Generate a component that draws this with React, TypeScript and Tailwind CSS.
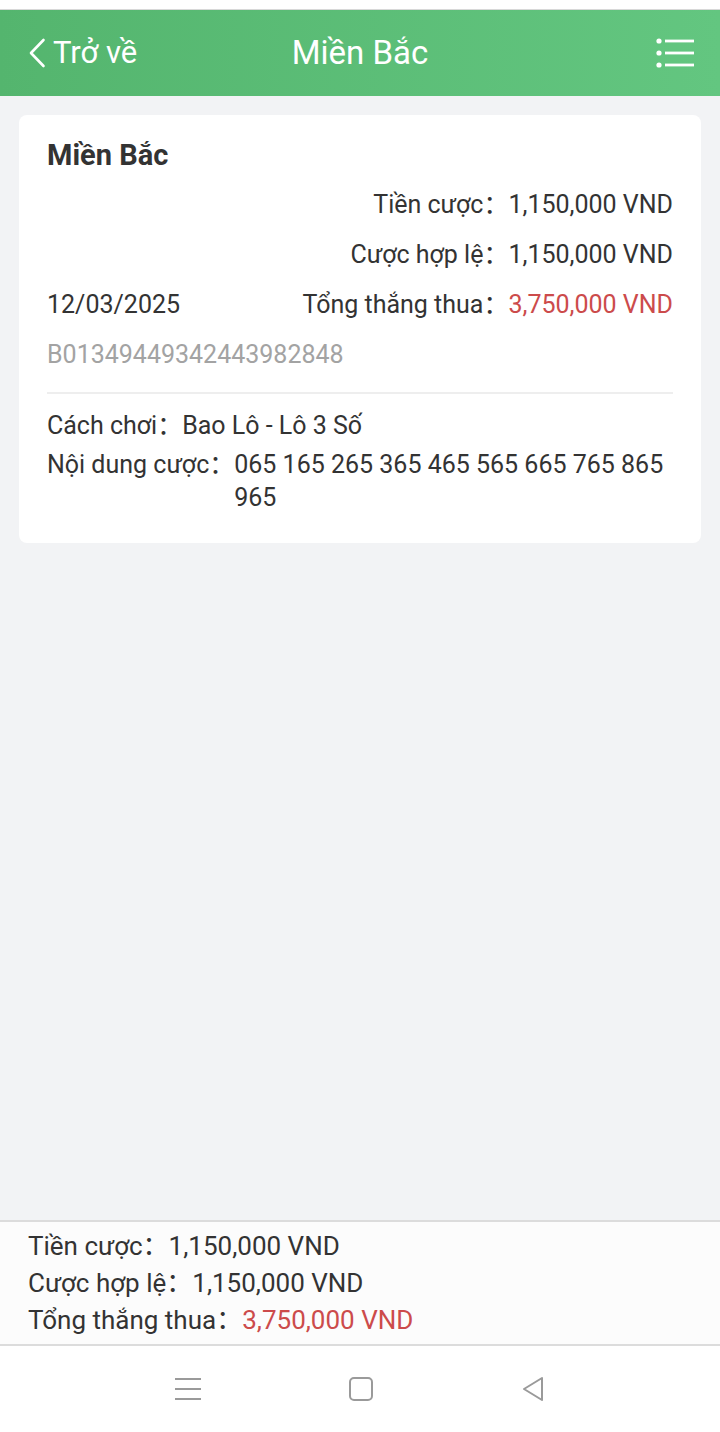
const font = { fontFamily: 'Roboto, "Noto Sans CJK SC", sans-serif' }

const Row = ({ label, value, red }: { label: string; value: string; red?: boolean }) => (
  <div className="flex items-center justify-end whitespace-nowrap">
    <span>{label}</span>
    <span className={red ? 'text-[#cc4b4b]' : ''}>{value}</span>
  </div>
)

export default function App() {
  return (
    <div className="flex h-[1432px] w-[720px] flex-col bg-[#f2f3f5] text-[#333]" style={font}>
      {/* status strip */}
      <div className="h-[9px] bg-white" />
      <div className="h-[1px] bg-[#d8d8d8]" />

      {/* Header */}
      <header className="relative flex h-[86px] items-center bg-gradient-to-r from-[#54b56e] to-[#63c680] text-white">
        <div className="flex items-center gap-[7px] pl-[28px]">
          <svg width="18" height="30" viewBox="0 0 18 30" fill="none">
            <path d="M15.5 2 L3 15 L15.5 28" stroke="white" strokeWidth="2.6" strokeLinecap="round" strokeLinejoin="round" />
          </svg>
          <span className="text-[31px]">Trở về</span>
        </div>
        <div className="absolute left-1/2 -translate-x-1/2 text-[33px]">Miền Bắc</div>
        <div className="ml-auto pr-[26px]">
          <svg width="38" height="30" viewBox="0 0 38 30" fill="none">
            <circle cx="3" cy="3" r="2.6" fill="white" />
            <circle cx="3" cy="15" r="2.6" fill="white" />
            <circle cx="3" cy="27" r="2.6" fill="white" />
            <rect x="9" y="1.6" width="29" height="2.8" fill="white" />
            <rect x="9" y="13.6" width="29" height="2.8" fill="white" />
            <rect x="9" y="25.6" width="29" height="2.8" fill="white" />
          </svg>
        </div>
      </header>

      {/* Main */}
      <main className="flex-1 px-[19px] pt-[19px]">
        <div className="rounded-lg bg-white px-[28px] pt-[22px] pb-[29px] text-[25px]">
          <div className="text-[29px] font-bold leading-[36px] text-[#333]">Miền Bắc</div>
          <div className="mt-[7px] flex h-[50px] items-center justify-end">
            <Row label="Tiền cược：" value="1,150,000 VND" />
          </div>
          <div className="flex h-[50px] items-center justify-end">
            <Row label="Cược hợp lệ：" value="1,150,000 VND" />
          </div>
          <div className="flex h-[50px] items-center justify-between">
            <span>12/03/2025</span>
            <Row label="Tổng thắng thua：" value="3,750,000 VND" red />
          </div>
          <div className="flex h-[50px] items-center text-[#a3a3a3]">B01349449342443982848</div>
          <div className="mt-[12px] h-[2px] bg-[#eeeeee]" />
          <div className="mt-[15px] flex leading-[34px]">
            <span className="shrink-0 whitespace-nowrap">Cách chơi：</span>
            <span>Bao Lô - Lô 3 Số</span>
          </div>
          <div className="mt-[5px] flex leading-[33px]">
            <span className="shrink-0 whitespace-nowrap">Nội dung cược：</span>
            <span>065 165 265 365 465 565 665 765 865 965</span>
          </div>
        </div>
      </main>

      {/* Summary */}
      <div className="border-t-2 border-b-2 border-[#dcdcdc] bg-[#fcfcfc] px-[28px] pt-[6px] pb-[5px] text-[26px] leading-[37px]">
        <div className="flex">
          <span>Tiền cược：</span>
          <span>1,150,000 VND</span>
        </div>
        <div className="flex">
          <span>Cược hợp lệ：</span>
          <span>1,150,000 VND</span>
        </div>
        <div className="flex">
          <span>Tổng thắng thua：</span>
          <span className="text-[#cc4b4b]">3,750,000 VND</span>
        </div>
      </div>

      {/* Nav bar */}
      <div className="flex h-[86px] items-center justify-center gap-[148px] bg-white">
        <svg width="26" height="26" viewBox="0 0 26 26">
          <rect x="0" y="2" width="26" height="2" fill="#9a9a9a" />
          <rect x="0" y="12" width="26" height="2" fill="#9a9a9a" />
          <rect x="0" y="22" width="26" height="2" fill="#9a9a9a" />
        </svg>
        <svg width="24" height="24" viewBox="0 0 24 24">
          <rect x="1" y="1" width="22" height="22" rx="4" fill="none" stroke="#9a9a9a" strokeWidth="2" />
        </svg>
        <svg width="24" height="26" viewBox="0 0 24 26">
          <path d="M21 2 L3 13 L21 24 Z" fill="none" stroke="#9a9a9a" strokeWidth="2" strokeLinejoin="round" />
        </svg>
      </div>
    </div>
  )
}
